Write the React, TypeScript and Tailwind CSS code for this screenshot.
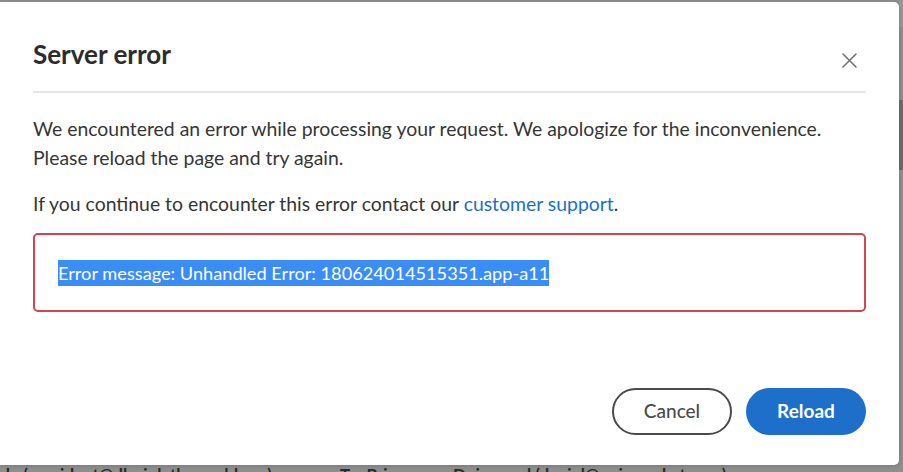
import React from 'react';

// Page behind the modal — only the top of its text peeks out under the dialog
const BehindText: React.FC = () => (
  <div className="absolute left-0 top-[465px] flex whitespace-nowrap text-[17px] font-bold leading-[20px] text-[#2a2a2a]">
    <span className="-ml-[4px] w-[344px]">ole (president@dlasinlatheworld.org)</span>
    <span className="w-[113px]">To: Pri</span>
    <span>Doinamed (daniel@oniomarket.com)</span>
  </div>
);

const CloseIcon: React.FC = () => (
  <svg width="15" height="15" viewBox="0 0 15 15" fill="none" stroke="#6e6e6e" strokeWidth="1.5" strokeLinecap="round">
    <path d="M1 1 L14 14 M14 1 L1 14" />
  </svg>
);

export default function App() {
  return (
    <div className="relative h-[472px] w-[903px] overflow-hidden bg-[#8e8e8e] font-['Lato',sans-serif]">
      <BehindText />

      {/* scrollbar of the page behind */}
      <div className="absolute right-0 top-0 flex h-full w-[4px] flex-col">
        <div className="h-[27px] bg-[#969696]" />
        <div className="h-[73px] bg-[#8e8e8e]" />
        <div className="h-[70px] bg-[#6b6b6b]" />
      </div>

      {/* DIALOG */}
      <div className="relative mt-[2px] flex h-[463px] w-[899px] flex-col rounded-r-[5px] bg-white px-[33px] pt-[36px] pb-[30px] shadow-[0_1px_4px_rgba(0,0,0,0.15)]">
        <div className="flex items-start justify-between">
          <h2 className="text-[26px] font-bold leading-[32px] text-[#2c2c2c]">Server error</h2>
          <button className="mr-[9px] mt-[15px]">
            <CloseIcon />
          </button>
        </div>

        <div className="mt-[21px] h-[2px] bg-[#e6e6e6]" />

        <div className="mt-[21px] text-[19.4px] leading-[29px] text-[#363636]">
          <p>
            We encountered an error while processing your request. We apologize for the inconvenience.
            <br />
            Please reload the page and try again.
          </p>
          <p className="mt-[17px]">
            If you continue to encounter this error contact our{' '}
            <a className="text-[#1b6fc9]">customer support</a>.
          </p>
        </div>

        <div className="mt-[15px] h-[79px] rounded-[5px] border-2 border-[#d6444f] pl-[23px] pt-[25px]">
          <span className="inline-block bg-[#3a8df7] text-[18.2px] leading-[26px] text-white">
            Error message: Unhandled Error: 180624014515351.app-a11
          </span>
        </div>

        <div className="mt-auto flex justify-end gap-[14px]">
          <button className="h-[47px] w-[120px] rounded-full border-2 border-[#4b4b4b] text-[19px] font-medium text-[#4b4b4b]">
            Cancel
          </button>
          <button className="h-[47px] w-[120px] rounded-full bg-[#1e6fc9] text-[19px] font-bold text-white">
            Reload
          </button>
        </div>
      </div>
    </div>
  );
}
